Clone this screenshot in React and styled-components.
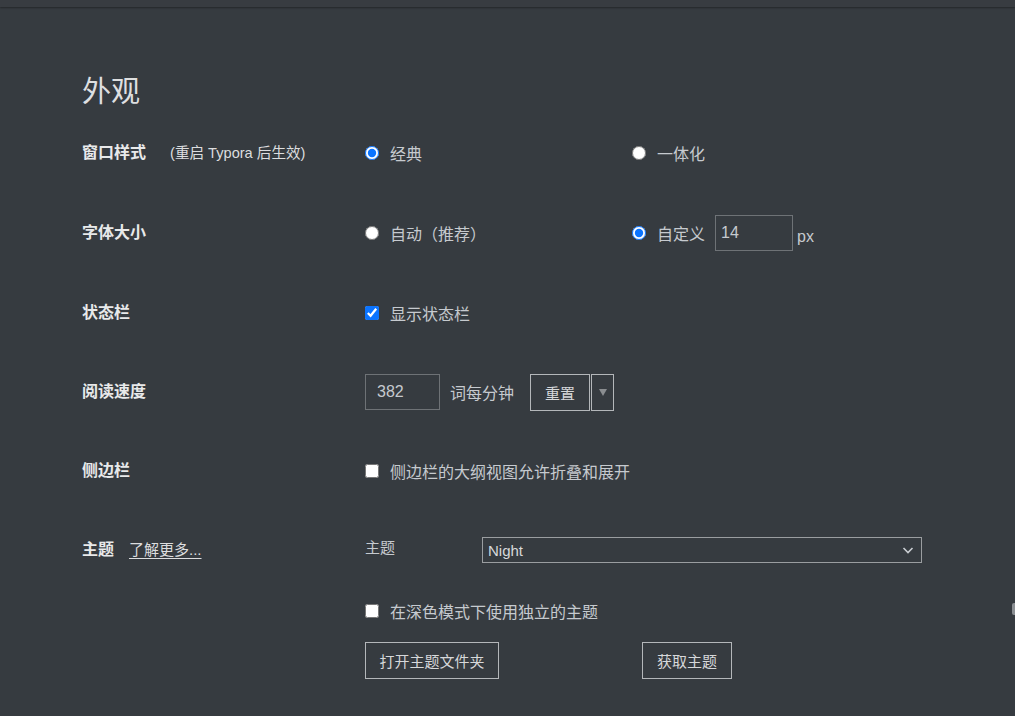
import React from "react";
import styled, { createGlobalStyle } from "styled-components";

const Global = createGlobalStyle`
  html, body { margin: 0; padding: 0; background: #363b40; }
  body { font-family: "Liberation Sans", "Noto Sans CJK SC", sans-serif; }
  * { box-sizing: border-box; }
`;

const Page = styled.div`
  position: relative;
  min-height: 716px;
  background: #363b40;
  overflow: hidden;
`;

const TopBar = styled.div`
  height: 7px;
  background: #383c41;
  box-shadow: 0 1px 2px rgba(0, 0, 0, 0.35);
`;

const Content = styled.div`
  padding: 0 0 0 82px;
`;

const Heading = styled.h1`
  margin: 64px 0 0;
  height: 42px;
  font-size: 29px;
  line-height: 42px;
  font-weight: normal;
  color: #dedfe0;
`;

const Row = styled.div`
  display: grid;
  grid-template-columns: 283px 1fr;
  align-items: center;
  height: ${(p) => p.$h}px;
`;

const Label = styled.div`
  display: flex;
  align-items: center;
  font-size: 16px;
  line-height: 22px;
  font-weight: bold;
  color: #e8e9ea;
`;

const Note = styled.span`
  margin-left: 24px;
  font-size: 14.6px;
  font-weight: normal;
  color: #dcdddf;
`;

const MoreLink = styled.a`
  margin-left: 15px;
  font-size: 15px;
  font-weight: normal;
  color: #dcdddf;
  text-decoration: underline;
  text-underline-offset: 3px;
`;

const Controls = styled.div`
  display: flex;
  align-items: center;
`;

const Option = styled.label`
  display: flex;
  align-items: center;
  width: ${(p) => (p.$w ? `${p.$w}px` : "auto")};
  font-size: 16px;
  line-height: 22px;
  color: #c6cacf;
`;

const OptText = styled.span`
  padding-top: 4px;
`;

const Radio = styled.input.attrs({ type: "radio" })`
  width: 14px;
  height: 14px;
  margin: 0 11px 0 0;
  accent-color: #0b74ff;
`;

const Check = styled.input.attrs({ type: "checkbox" })`
  width: 14px;
  height: 14px;
  margin: 0 11px 0 0;
  accent-color: #0b74ff;
`;

const NumInput = styled.input`
  width: ${(p) => p.$w}px;
  height: 36px;
  margin: ${(p) => p.$m || "0"};
  padding: 0 0 0 ${(p) => p.$pl || 5}px;
  background: transparent;
  border: 1px solid #6e7276;
  color: #c6cacf;
  font-family: "Liberation Sans", sans-serif;
  font-size: 16px;
  outline: none;
`;

const Unit = styled.span`
  margin-left: ${(p) => p.$ml}px;
  padding-top: ${(p) => p.$pt || 0}px;
  font-size: 16px;
  color: #c6cacf;
`;

const Button = styled.button`
  height: ${(p) => p.$h || 37}px;
  width: ${(p) => p.$w}px;
  margin-left: ${(p) => p.$ml || 0}px;
  padding: 0;
  background: transparent;
  border: 1px solid #b4b7ba;
  color: #d6d8da;
  font-family: "Liberation Sans", "Noto Sans CJK SC", sans-serif;
  font-size: 15px;
  display: flex;
  align-items: center;
  justify-content: center;
`;

const Caret = styled.span`
  width: 0;
  height: 0;
  border-left: 4px solid transparent;
  border-right: 4px solid transparent;
  border-top: 7px solid #8a8d90;
`;

const SubLabel = styled.span`
  width: 117px;
  font-size: 15px;
  line-height: 20px;
  color: #c6cacf;
  margin-top: -4px;
`;

const Select = styled.div`
  width: 440px;
  height: 26px;
  border: 1px solid #9a9da0;
  display: flex;
  align-items: center;
  justify-content: space-between;
  padding: 0 6px 0 5px;
  font-size: 15px;
  color: #d6d8da;
`;

const ButtonRow = styled.div`
  display: flex;
  margin: 9px 0 0 283px;
`;

const EdgeMark = styled.div`
  position: absolute;
  right: 0;
  top: 603px;
  width: 3px;
  height: 12px;
  background: #8b8f93;
  border-radius: 2px 0 0 2px;
`;

export default function App() {
  return (
    <Page>
      <Global />
      <TopBar />
      <Content>
        <Heading>外观</Heading>

        <Row $h={80}>
          <Label>
            窗口样式<Note>(重启 Typora 后生效)</Note>
          </Label>
          <Controls>
            <Option $w={267}>
              <Radio name="win" defaultChecked />
              <OptText>经典</OptText>
            </Option>
            <Option>
              <Radio name="win" />
              <OptText>一体化</OptText>
            </Option>
          </Controls>
        </Row>

        <Row $h={80}>
          <Label>字体大小</Label>
          <Controls>
            <Option $w={267}>
              <Radio name="fs" />
              <OptText>自动（推荐）</OptText>
            </Option>
            <Option>
              <Radio name="fs" defaultChecked />
              <OptText>自定义</OptText>
            </Option>
            <NumInput $w={78} $m="0 0 0 10px" defaultValue="14" />
            <Unit $ml={4} $pt={8}>px</Unit>
          </Controls>
        </Row>

        <Row $h={80}>
          <Label>状态栏</Label>
          <Controls>
            <Option>
              <Check defaultChecked />
              <OptText>显示状态栏</OptText>
            </Option>
          </Controls>
        </Row>

        <Row $h={78}>
          <Label>阅读速度</Label>
          <Controls>
            <NumInput $w={75} $pl={11} defaultValue="382" />
            <Unit $ml={10}>词每分钟</Unit>
            <Button $w={60} $h={37} $ml={16}>重置</Button>
            <Button $w={23} $h={37} $ml={1}>
              <Caret />
            </Button>
          </Controls>
        </Row>

        <Row $h={80}>
          <Label>侧边栏</Label>
          <Controls>
            <Option>
              <Check />
              <OptText>侧边栏的大纲视图允许折叠和展开</OptText>
            </Option>
          </Controls>
        </Row>

        <Row $h={78}>
          <Label>
            主题<MoreLink>了解更多...</MoreLink>
          </Label>
          <Controls>
            <SubLabel>主题</SubLabel>
            <Select>
              Night
              <svg width="14" height="14" viewBox="0 0 14 14">
                <path d="M2.5 5 L7 9.5 L11.5 5" fill="none" stroke="#c9cdd1" strokeWidth="1.6" />
              </svg>
            </Select>
          </Controls>
        </Row>

        <Row $h={44}>
          <div />
          <Controls>
            <Option>
              <Check />
              <OptText>在深色模式下使用独立的主题</OptText>
            </Option>
          </Controls>
        </Row>

        <ButtonRow>
          <Button $w={134}>打开主题文件夹</Button>
          <Button $w={90} $ml={143}>获取主题</Button>
        </ButtonRow>
      </Content>
      <EdgeMark />
    </Page>
  );
}
